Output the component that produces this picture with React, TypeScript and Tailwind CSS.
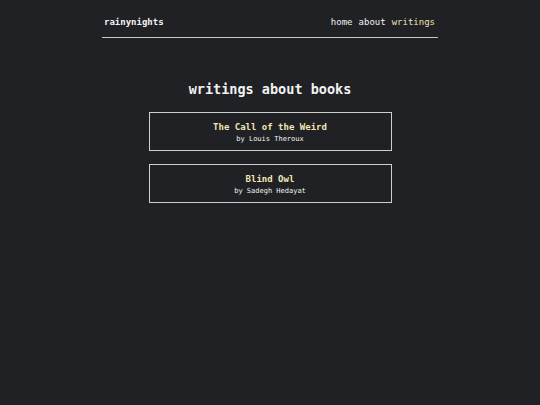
const books = [
  { title: 'The Call of the Weird', author: 'by Louis Theroux' },
  { title: 'Blind Owl', author: 'by Sadegh Hedayat' },
];

export default function App() {
  return (
    <div
      className="min-h-screen w-full bg-[#202124] text-[#f2f2f2]"
      style={{ fontFamily: '"DejaVu Sans Mono", "Liberation Mono", monospace' }}
    >
      <div className="w-[336px] mx-auto">
        {/* Header */}
        <header className="flex items-center justify-between px-[2px] pt-[16px] pb-[9px] border-b border-[#c8c8c8] text-[9px] leading-[12px] font-bold">
          <span>rainynights</span>
          <nav className="flex gap-[6px] pr-[1px] font-normal">
            <span>home</span>
            <span>about</span>
            <span className="text-[#ece3b4]">writings</span>
          </nav>
        </header>

        {/* Main */}
        <main className="flex flex-col items-center pt-[42px]">
          <h1 className="text-[13.5px] leading-[18px] font-bold mb-[14px]">writings about books</h1>
          <div className="flex flex-col gap-[13px]">
            {books.map((b) => (
              <div
                key={b.title}
                className="w-[243px] border border-[#cfcfcf] pt-[8px] pb-[6px] flex flex-col items-center"
              >
                <div className="text-[9px] leading-[12px] font-bold text-[#f3e6b6]">{b.title}</div>
                <div className="text-[7px] leading-[10px] mt-[1px]">{b.author}</div>
              </div>
            ))}
          </div>
        </main>
      </div>
    </div>
  );
}
